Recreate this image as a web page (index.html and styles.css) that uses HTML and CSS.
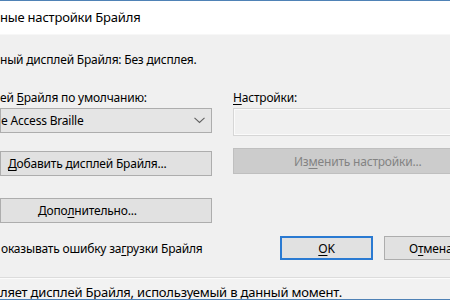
FILE: index.html
```html
<!DOCTYPE html>
<html lang="ru">
<head>
<meta charset="utf-8">
<link rel="stylesheet" href="styles.css">
</head>
<body>
<div class="window">
  <div class="titlebar">ные настройки Брайля</div>
  <div class="content">
    <div class="current">ный дисплей Брайля: Без дисплея.</div>
    <div class="columns">
      <div class="col-left">
        <div class="label">ей <u>Б</u>райля по умолчанию:</div>
        <div class="combo">
          <span class="combo-text">e Access Braille</span>
          <svg class="chevron" width="11" height="7" viewBox="0 0 11 7"><path d="M0.5 0.8 L5.5 5.5 L10.5 0.8" fill="none" stroke="#606060" stroke-width="1.1"/></svg>
        </div>
        <div class="btn btn-add"><u>Д</u>обавить дисплей Брайля...</div>
        <div class="btn btn-more">Допо<u>л</u>нительно...</div>
      </div>
      <div class="col-right">
        <div class="label"><u>Н</u>астройки:</div>
        <div class="edit"></div>
        <div class="btn btn-disabled">Из<u>м</u>енить настройки...</div>
      </div>
    </div>
    <div class="bottom-row">
      <div class="check-label">оказывать ошибку за<u>г</u>рузки Брайля</div>
      <div class="buttons">
        <div class="btn btn-ok"><u>O</u>K</div>
        <div class="btn btn-cancel">О<u>т</u>мена</div>
      </div>
    </div>
  </div>
  <div class="status">ляет дисплей Брайля, используемый в данный момент.</div>
</div>
</body>
</html>
```
FILE: styles.css
```css
html, body {
  margin: 0;
  padding: 0;
}
body {
  width: 450px;
  height: 300px;
  overflow: hidden;
  background: #f0f0f0;
  font-family: "Noto Sans", "Open Sans", sans-serif;
  font-size: 12px;
  letter-spacing: -0.2px;
  color: #000;
}
u {
  text-decoration: underline;
  text-underline-offset: 2px;
}
.window {
  width: 450px;
  height: 300px;
  box-sizing: border-box;
  border-top: 1px solid #4f82b6;
  border-bottom: 1px solid #4f82b6;
  display: flex;
  flex-direction: column;
  overflow: hidden;
}
.titlebar {
  height: 33px;
  line-height: 32px;
  background: #ffffff;
  font-size: 13px;
  border-bottom: 1px solid #f7f7f7;
  white-space: nowrap;
}
.content {
  flex: 1;
  background: #f0f0f0;
  padding-top: 17px;
  border-bottom: 1px solid #dcdcdc;
}
.current {
  height: 16px;
  line-height: 16px;
  white-space: nowrap;
}
.columns {
  display: grid;
  grid-template-columns: 212px 240px;
  column-gap: 21px;
  margin-top: 22px;
}
.label {
  height: 16px;
  line-height: 16px;
  white-space: nowrap;
}
.combo {
  margin-top: 2px;
  height: 25px;
  box-sizing: border-box;
  background: #e5e5e5;
  border: 1px solid #adadad;
  display: flex;
  align-items: center;
  justify-content: space-between;
  padding: 0 6px 0 0;
}
.combo-text {
  white-space: nowrap;
}
.chevron {
  display: block;
}
.btn {
  box-sizing: border-box;
  background: #e1e1e1;
  border: 1px solid #adadad;
  display: flex;
  align-items: center;
  white-space: nowrap;
  flex-shrink: 0;
}
.btn-add {
  margin-top: 18px;
  height: 25px;
  padding-left: 7px;
}
.btn-more {
  margin-top: 22px;
  height: 25px;
  padding-left: 37px;
}
.edit {
  margin-top: 2px;
  height: 28px;
  box-sizing: border-box;
  border: 1px solid #d6d6d6;
  box-shadow: inset 0 0 0 1px #fafafa;
  background: #f0f0f0;
}
.btn-disabled {
  margin-top: 12px;
  height: 26px;
  background: #cccccc;
  border-color: #bfbfbf;
  color: #838383;
  padding-left: 60px;
}
.bottom-row {
  display: flex;
  align-items: center;
  margin-top: 13px;
  height: 24px;
}
.check-label {
  width: 280px;
  flex-shrink: 0;
  white-space: nowrap;
  padding-left: 1px;
  box-sizing: border-box;
}
.buttons {
  display: flex;
  gap: 11px;
  flex-shrink: 0;
}
.btn-ok {
  width: 93px;
  height: 24px;
  border: 2px solid #2a7ad2;
  justify-content: center;
}
.btn-cancel {
  width: 93px;
  height: 24px;
  padding-left: 24px;
}
.status {
  height: 21px;
  box-sizing: border-box;
  padding-top: 5px;
  line-height: 16px;
  font-size: 13px;
  background: #f2f2f2;
  white-space: nowrap;
  border-top: 1px solid #fbfbfb;
}
```
